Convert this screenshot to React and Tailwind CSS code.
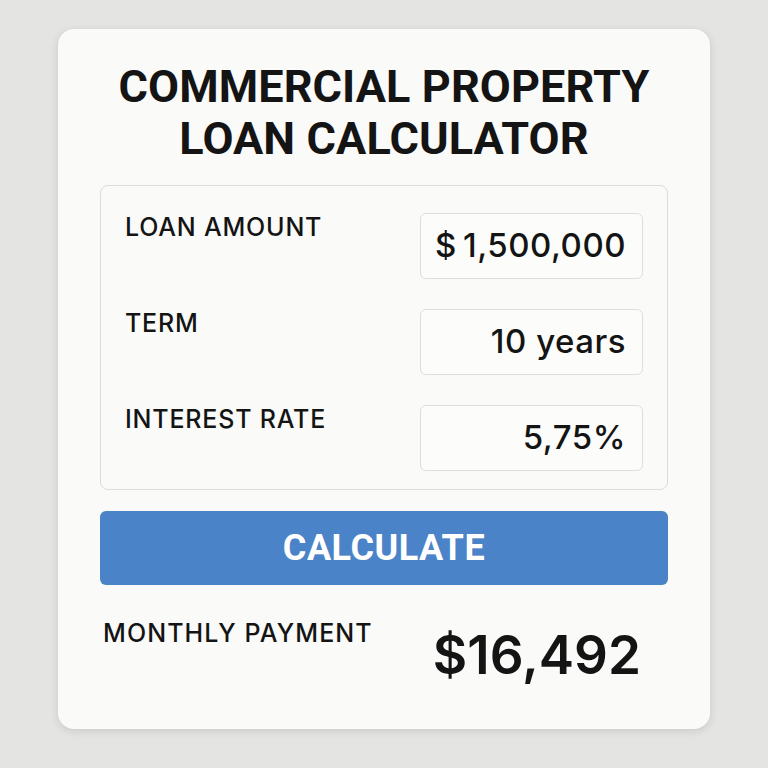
export default function App() {
  const fields = [
    { label: "LOAN AMOUNT", value: "$\u20091,500,000" },
    { label: "TERM", value: "10 years" },
    { label: "INTEREST RATE", value: "5,75%" },
  ];

  return (
    <div className="min-h-[768px] bg-[#e4e4e3] flex justify-center pt-[29px] font-['Inter',sans-serif] text-[#141414]">
      <div className="w-[652px] h-[700px] bg-[#fafaf9] rounded-[16px] shadow-[0_2px_8px_rgba(0,0,0,0.12)] px-[42px] pt-[32px]">
        <h1 className="text-center font-['Roboto',sans-serif] font-bold text-[45px] leading-[52px] tracking-[0.1px]">
          COMMERCIAL PROPERTY
          <br />
          LOAN CALCULATOR
        </h1>

        <div className="mt-[20px] border border-[#dcdcdb] rounded-[8px] pl-[24px] pr-[24px] pt-[27px] pb-[18px] flex flex-col gap-[30px]">
          {fields.map((f) => (
            <div key={f.label} className="flex justify-between items-start">
              <span className="pt-[2px] text-[25px] leading-[25px] font-medium tracking-[0.8px]">
                {f.label}
              </span>
              <div className="w-[223px] h-[66px] bg-[#fcfcfb] border border-[#dddddc] rounded-[6px] flex items-center justify-end pr-[16px] text-[33px] font-medium tracking-[0.5px] whitespace-pre">
                {f.value}
              </div>
            </div>
          ))}
        </div>

        <button className="mt-[21px] w-full h-[74px] bg-[#4a83c7] rounded-[6px] text-white font-['Roboto',sans-serif] font-bold text-[36px] tracking-[0.5px]">
          CALCULATE
        </button>

        <div className="mt-[36px] flex justify-between items-start pl-[3px] pr-[27px]">
          <span className="text-[25px] leading-[25px] font-medium tracking-[1.1px]">
            MONTHLY PAYMENT
          </span>
          <span className="pt-[8px] text-[53px] leading-[53px] font-semibold">
            $16,492
          </span>
        </div>
      </div>
    </div>
  );
}
